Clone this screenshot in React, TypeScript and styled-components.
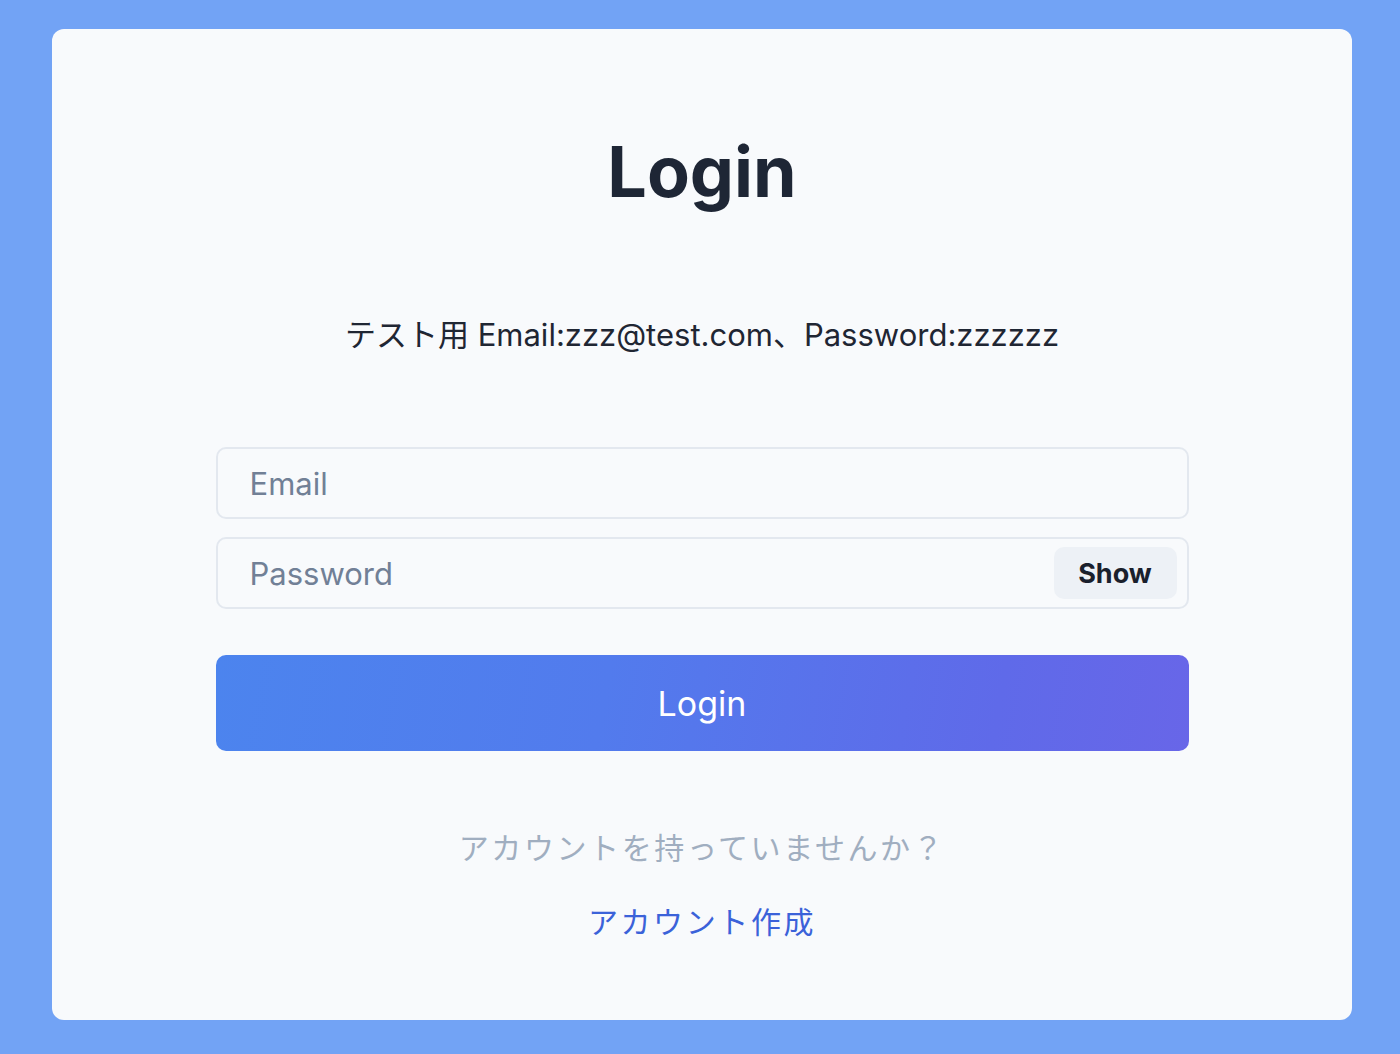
import React from "react";
import styled, { createGlobalStyle } from "styled-components";

const Global = createGlobalStyle`
  html, body {
    margin: 0;
    padding: 0;
    background: #72a3f5;
  }
  body {
    font-family: Inter, "Noto Sans CJK JP", sans-serif;
  }
  * { box-sizing: border-box; }
`;

const Page = styled.div`
  width: 1400px;
  height: 1054px;
  padding: 29px 48px 34px 52px;
  background: #72a3f5;
`;

const Card = styled.div`
  height: 991px;
  background: #f8fafc;
  border-radius: 12px;
  display: flex;
  flex-direction: column;
  align-items: center;
  padding-top: 101px;
`;

const Title = styled.h1`
  margin: 0;
  font-size: 70px;
  line-height: 84px;
  font-weight: 700;
  color: #1e2635;
  letter-spacing: 0;
`;

const Info = styled.p`
  margin: 99px 0 0;
  font-size: 31px;
  line-height: 43px;
  color: #1f2633;
`;

const Form = styled.form`
  width: 973px;
  margin-top: 91px;
  display: flex;
  flex-direction: column;
  gap: 18px;
`;

const Field = styled.div`
  position: relative;
  height: 72px;
  border: 2px solid #e3e8ef;
  border-radius: 10px;
  display: flex;
  align-items: center;
`;

const Input = styled.input`
  flex: 1;
  height: 100%;
  border: none;
  background: transparent;
  outline: none;
  padding: 0 32px;
  font-family: Inter, "Noto Sans CJK JP", sans-serif;
  font-size: 31px;
  color: #1f2633;
  &::placeholder {
    color: #718096;
  }
`;

const ShowButton = styled.button`
  position: absolute;
  right: 10px;
  top: 8px;
  width: 123px;
  height: 52px;
  border: none;
  border-radius: 10px;
  background: #edf1f6;
  font-family: Inter, sans-serif;
  font-weight: 700;
  font-size: 27px;
  color: #1a202c;
`;

const SubmitButton = styled.button`
  margin-top: 28px;
  height: 96px;
  border: none;
  border-radius: 10px;
  background: linear-gradient(100deg, #4c84ee 0%, #527bed 40%, #5f6ae9 80%, #6866e8 100%);
  color: #ffffff;
  font-family: Inter, sans-serif;
  font-size: 34px;
  font-weight: 400;
`;

const Prompt = styled.p`
  margin: 76px 0 0;
  font-size: 30px;
  line-height: 42px;
  color: #a0aec0;
  letter-spacing: 2.6px;
`;

const SignupLink = styled.a`
  margin-top: 32px;
  font-size: 30px;
  line-height: 42px;
  color: #3b62d9;
  letter-spacing: 2.6px;
  text-decoration: none;
`;

export default function App() {
  return (
    <>
      <Global />
      <Page>
        <Card>
          <Title>Login</Title>
          <Info>テスト用 Email:zzz@test.com、Password:zzzzzz</Info>
          <Form onSubmit={(e) => e.preventDefault()}>
            <Field>
              <Input type="email" placeholder="Email" />
            </Field>
            <Field>
              <Input type="password" placeholder="Password" />
              <ShowButton type="button">Show</ShowButton>
            </Field>
            <SubmitButton type="submit">Login</SubmitButton>
          </Form>
          <Prompt>アカウントを持っていませんか？</Prompt>
          <SignupLink href="#">アカウント作成</SignupLink>
        </Card>
      </Page>
    </>
  );
}
